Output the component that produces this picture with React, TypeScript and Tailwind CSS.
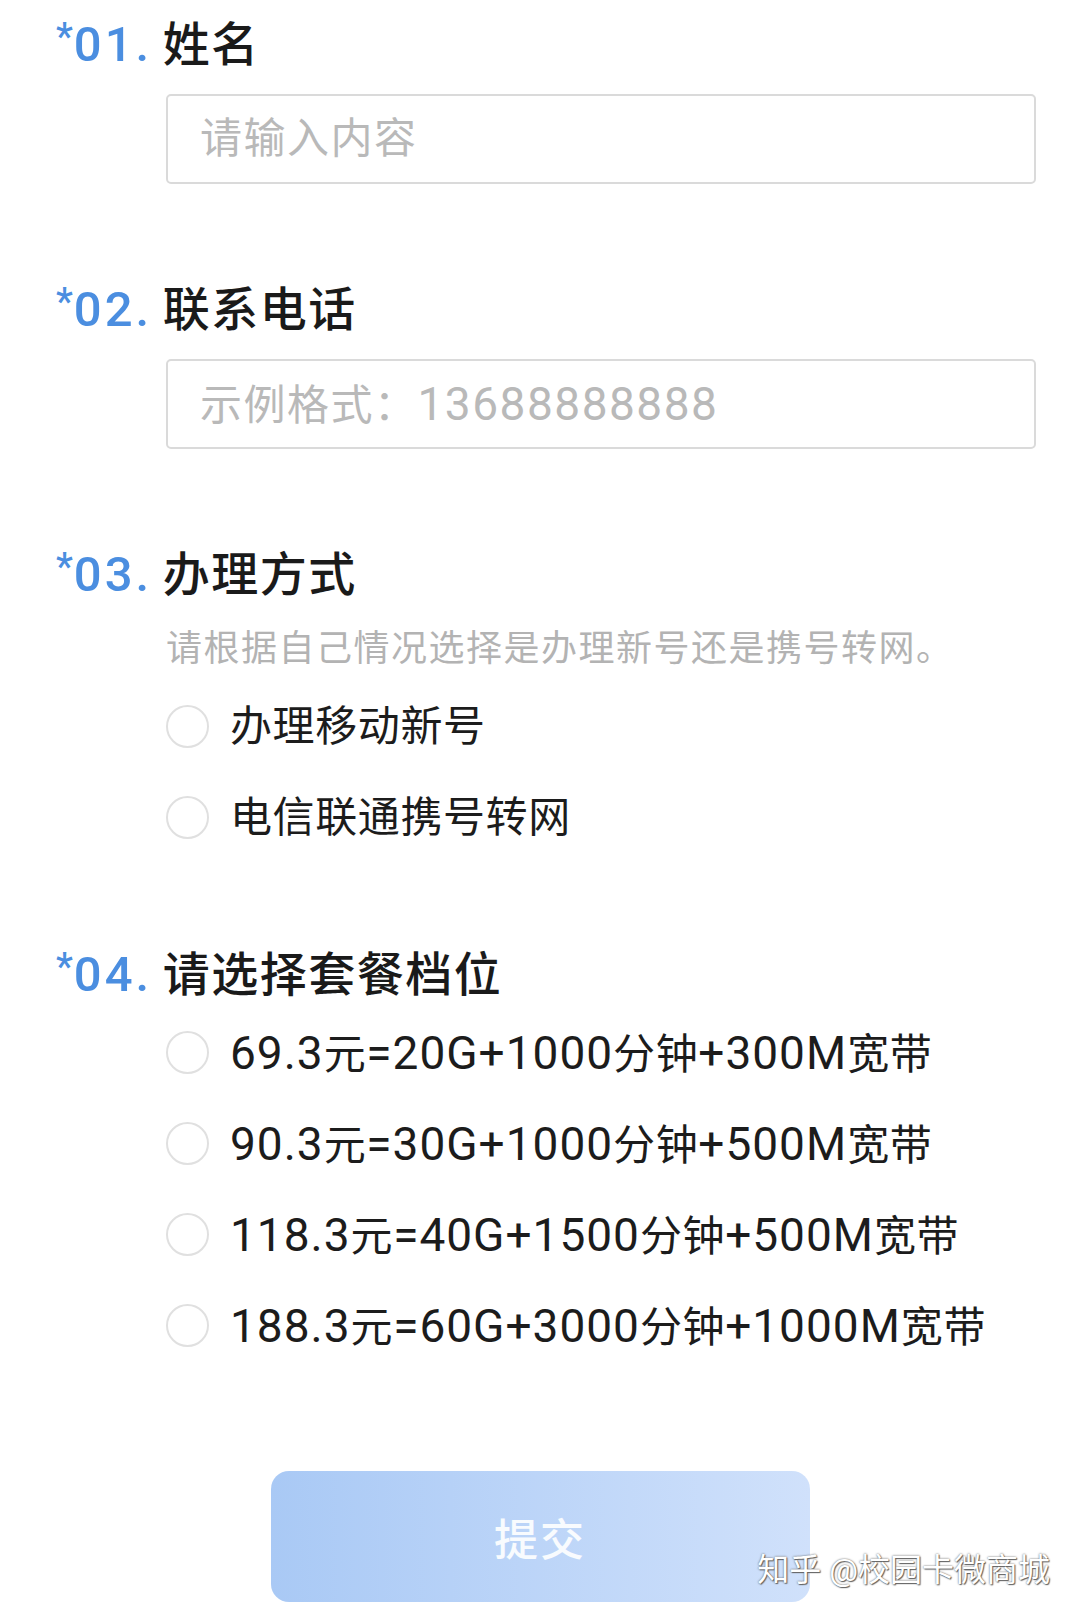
import React from "react";

const FONT = '[font-family:Roboto,"Noto_Sans_CJK_SC",sans-serif]';

function Mixed({ text, cjk, ascii }: { text: string; cjk: string; ascii: string }) {
  const parts = text.split(/([\x00-\x7F]+)/).filter((p) => p.length > 0);
  return (
    <>
      {parts.map((p, i) =>
        /^[\x00-\x7F]+$/.test(p) ? (
          <span key={i} className={ascii}>
            {p}
          </span>
        ) : (
          <span key={i} className={cjk}>
            {p}
          </span>
        )
      )}
    </>
  );
}

function Heading({ num, title }: { num: string; title: string }) {
  return (
    <div className="flex h-[64px] items-center pl-[56px]">
      <span className="relative top-[-7px] text-[38px] font-medium leading-none text-[#4b8ee0]">*</span>
      <span className="ml-[1px] w-[89px] text-[49px] font-medium leading-none tracking-[3px] text-[#4b8ee0]">{num}.</span>
      <span className="text-[47px] font-medium leading-none tracking-[1.5px] text-[#1a1a1a]">{title}</span>
    </div>
  );
}

function Radio({ label }: { label: string }) {
  return (
    <div className="flex h-[91px] items-center">
      <div className="h-[43px] w-[43px] shrink-0 rounded-full border-2 border-[#e0e0e0] bg-white" />
      <span className="ml-[21px] flex items-baseline leading-none text-[#1c1c1c]">
        <Mixed text={label} cjk="text-[42px] tracking-[0.6px]" ascii="text-[46px] tracking-[1px]" />
      </span>
    </div>
  );
}

function Input({ placeholder }: { placeholder: string }) {
  return (
    <div className="ml-[166px] mr-[44px] mt-[18px] flex h-[90px] items-center rounded-[5px] border-2 border-[#dadada] bg-white pl-[32px]">
      <span className="flex items-baseline leading-none text-[#b9b9b9]">
        <Mixed text={placeholder} cjk="text-[42px] tracking-[1.5px]" ascii="text-[46px] tracking-[1.5px]" />
      </span>
    </div>
  );
}

export default function App() {
  return (
    <div className={`relative h-[1616px] w-[1080px] overflow-hidden bg-white pt-[12px] ${FONT}`}>
      <section>
        <Heading num="01" title="姓名" />
        <Input placeholder="请输入内容" />
      </section>

      <section className="mt-[93px]">
        <Heading num="02" title="联系电话" />
        <Input placeholder="示例格式：13688888888" />
      </section>

      <section className="mt-[93px]">
        <Heading num="03" title="办理方式" />
        <div className="ml-[166px] mt-[21px] flex h-[44px] items-center text-[36px] leading-none tracking-[1.5px] text-[#b3b3b3]">
          请根据自己情况选择是办理新号还是携号转网。
        </div>
        <div className="ml-[166px] mt-[10px] flex flex-col">
          <Radio label="办理移动新号" />
          <Radio label="电信联通携号转网" />
        </div>
      </section>

      <section className="mt-[79px]">
        <Heading num="04" title="请选择套餐档位" />
        <div className="ml-[166px] mt-[1px] flex flex-col">
          <Radio label="69.3元=20G+1000分钟+300M宽带" />
          <Radio label="90.3元=30G+1000分钟+500M宽带" />
          <Radio label="118.3元=40G+1500分钟+500M宽带" />
          <Radio label="188.3元=60G+3000分钟+1000M宽带" />
        </div>
      </section>

      <div className="mx-auto mt-[100px] flex h-[131px] w-[539px] items-center justify-center rounded-[18px] bg-gradient-to-r from-[#a9c9f5] to-[#d0e1fb] pt-[8px]">
        <span className="text-[44px] font-medium tracking-[2px] text-white/90">提交</span>
      </div>

      <div className="absolute right-[30px] top-[1550px] text-[32px] leading-[40px] text-white [text-shadow:0_0_2px_#555,1px_1px_1px_#666]">
        知乎 @校园卡微商城
      </div>
    </div>
  );
}
